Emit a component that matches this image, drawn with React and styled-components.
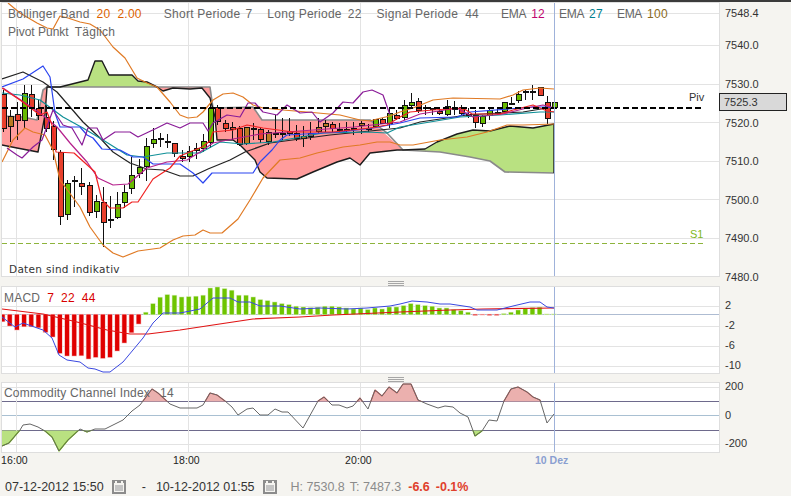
import React from 'react';
import styled, { createGlobalStyle } from 'styled-components';

const GlobalStyle = createGlobalStyle`
  html, body {
    margin: 0;
    background: #f5f4f0;
    font-family: "Liberation Sans", Arial, sans-serif;
  }
`;

const barX = (i) => 2.6 + i * 7.16;

// kind, high, body top, body bottom, low (screen pixels of the price pane)
const candles = [
  ['r', 90, 94, 128, 132], ['b', 110, 116, 126, 142], ['r', 102, 114, 120, 140], ['g', 85, 93, 120, 128],
  ['r', 85, 94, 108, 117], ['r', 100, 108, 115, 120], ['r', 105, 117, 128, 132], ['r', 121, 126, 149, 160],
  ['r', 150, 152, 216, 225], ['g', 180, 183, 214, 220], ['d', 176, 180, 181, 207], ['r', 168, 183, 186, 195],
  ['r', 182, 185, 212, 216], ['g', 195, 201, 211, 218], ['r', 187, 202, 222, 247], ['d', 196, 219, 220, 228],
  ['g', 192, 204, 217, 219], ['g', 185, 192, 202, 208], ['g', 157, 175, 188, 194], ['g', 159, 167, 173, 178],
  ['g', 138, 146, 166, 181], ['g', 128, 139, 143, 148], ['d', 133, 138, 139, 147], ['d', 134, 141, 142, 148],
  ['r', 143, 143, 153, 157], ['r', 150, 156, 158, 162], ['g', 146, 151, 156, 162], ['g', 143, 148, 150, 159],
  ['g', 134, 141, 148, 152], ['g', 100, 108, 142, 148], ['r', 105, 107, 121, 125], ['r', 120, 123, 128, 132],
  ['r', 122, 127, 129, 140], ['r', 126, 128, 144, 146], ['b', 127, 127, 143, 145], ['d', 123, 128, 129, 140],
  ['r', 127, 129, 139, 143], ['b', 130, 132, 141, 145], ['d', 115, 133, 134, 138], ['d', 118, 133, 134, 140],
  ['r', 118, 131, 133, 136], ['r', 125, 133, 138, 141], ['b', 126, 136, 138, 147], ['r', 122, 133, 136, 140],
  ['b', 118, 127, 131, 134], ['b', 120, 123, 126, 132], ['r', 122, 124, 128, 132], ['d', 123, 129, 130, 132],
  ['d', 122, 129, 130, 133], ['r', 122, 128, 129, 135], ['b', 121, 123, 125, 134], ['d', 124, 128, 129, 132],
  ['g', 119, 119, 126, 127], ['r', 118, 119, 123, 124], ['g', 108, 113, 123, 128], ['r', 110, 115, 118, 120],
  ['g', 100, 105, 117, 120], ['g', 93, 102, 105, 108], ['r', 98, 101, 110, 113], ['d', 105, 107, 108, 115],
  ['d', 108, 108, 109, 115], ['r', 107, 111, 113, 115], ['g', 100, 106, 114, 116], ['d', 101, 108, 109, 115],
  ['r', 105, 107, 113, 115], ['d', 108, 114, 115, 118], ['r', 110, 115, 122, 128], ['g', 115, 116, 123, 127],
  ['g', 108, 110, 115, 120], ['d', 108, 112, 113, 115], ['g', 102, 102, 111, 113], ['d', 97, 103, 104, 104],
  ['g', 91, 94, 100, 103], ['d', 90, 91, 92, 100], ['d', 85, 91, 92, 100], ['r', 87, 87, 95, 95],
  ['r', 96, 102, 118, 124], ['g', 102, 102, 107, 110],
];

const candleFill = { g: '#68bb00', r: '#e8402c', b: '#b87b22', d: '#111' };

const kumoFills = [
  ['#ff9c9c', '2,116 23,117 37,120 43,90 47,87 45,115 38,152 17,148 2,145'],
  ['#b9e181', '47,87 60,87 88,80 95,61 102,61 109,75 132,75 138,81 147,82 157,87'],
  ['#ff9c9c', '157,87 163,91 173,88 190,89 202,88 210,98 215,117 217,140 233,140 240,145 245,150 255,160 260,172 267,178 297,179 313,172 337,162 350,158 360,165 370,153 397,150 403,150 370,120 262,120 253,107 213,108 210,87'],
  ['#b9e181', '403,150 425,149 437,142 457,134 473,130 490,131 510,126 533,128 554,124 554,173 505,172 490,161 470,157 440,152'],
];

const spanB = '2,116 23,117 37,120 43,90 47,87 210,87 213,108 253,107 262,120 370,120 387,133 403,150 440,152 470,157 490,161 505,172 554,173';
const spanA = '2,145 17,148 38,152 45,115 47,87 60,87 88,80 95,61 102,61 109,75 132,75 138,81 147,82 157,87 163,91 173,88 190,89 202,88 210,98 215,117 217,140 233,140 240,145 245,150 255,160 260,172 267,178 297,179 313,172 337,162 350,158 360,165 370,153 397,150 403,150 425,149 437,142 457,134 473,130 490,131 510,126 533,128 554,124 554,173';

const priceLines = [
  ['#e07a24', '8,3 20,13 37,23 47,28 53,29 60,16 68,18 80,22 90,24 100,30 113,47 125,58 137,78 147,83 157,87 170,102 180,115 188,118 197,117 203,112 213,100 223,94 233,93 243,97 253,105 263,108 283,110 307,112 340,115 360,120 370,121 377,119 390,116 400,112 413,108 433,100 453,98 500,99 513,95 523,90 540,88 554,89'],
  ['#e07a24', '2,162 13,140 25,128 33,132 45,135 53,150 60,180 80,207 90,227 103,245 113,253 123,257 138,251 160,248 173,240 183,236 195,235 203,230 210,233 222,233 238,219 250,200 263,178 280,160 300,158 317,153 343,147 360,145 377,142 390,142 400,145 413,145 440,140 467,137 487,132 507,125 523,125 554,124'],
  ['#222', '2,79 23,72 43,82 57,92 70,107 83,122 100,138 113,152 130,163 147,169 163,170 180,176 193,176 208,169 230,160 245,152 270,143 330,135 400,128 420,122 467,115 500,113 523,112 547,108'],
  ['#109098', '2,93 20,95 40,100 63,117 83,128 103,140 127,155 143,157 167,153 200,153 220,142 243,144 273,142 323,133 367,132 387,133 400,127 460,117 500,115 540,112 555,112'],
  ['#2a44f0', '2,87 23,79 43,66 50,77 55,113 60,127 80,127 87,135 93,138 102,149 120,150 133,157 143,157 153,164 180,164 193,173 203,183 212,173 253,173 260,162 272,150 280,140 287,135 340,132 373,128 400,123 420,118 457,117 470,112 533,107 547,107 555,108'],
  ['#8a1c98', '7,148 17,155 22,158 33,147 42,140 53,110 63,125 72,128 82,145 88,128 97,128 103,140 115,132 130,132 138,137 157,128 167,123 180,128 190,123 203,123 208,131 213,123 227,115 240,117 248,103 255,103 263,112 277,115 287,105 300,113 312,112 320,122 333,113 343,102 353,103 363,92 372,90 383,95 390,115'],
  ['#b5208c', '3,88 40,113 57,127 70,143 87,162 98,178 113,185 128,184 147,168 167,162 187,160 200,152 213,143 233,139 260,134 300,131 354,127 400,122 420,114 457,108 473,117 503,114 527,108 543,105 555,108'],
  ['#f02222', '2,88 20,100 40,115 47,112 52,125 56,152 74,153 95,172 102,200 110,208 123,208 132,202 138,202 153,179 170,168 180,156 202,147 210,141 213,132 233,130 247,125 263,128 293,132 333,132 370,128 387,125 400,117 410,112 433,110 463,108 472,114 500,114 513,110 533,105 547,111 555,112'],
];

const priceTicks = [
  ['7548.4', 16], ['7540.0', 48], ['7530.0', 87], ['7520.0', 126],
  ['7510.0', 164], ['7500.0', 203], ['7490.0', 241], ['7480.0', 280],
];

// distance of each histogram bar from the zero line, positive is below it
const macdBars = [
  7, 11.3, 15.3, 12, 12, 13, 17.7, 22.3, 38.7, 41.3, 41.3, 41, 44.3, 42.7, 43.7, 42.7, 36.3, 28.3, 18, 9.3,
  -2, -10.7, -17, -19.7, -19, -17.3, -17.7, -18, -19, -26.3, -27.3, -25.7, -24, -19, -19, -17.3, -14.7, -13.7,
  -12.3, -10.7, -9.7, -8, -7.3, -6.7, -7, -8, -8, -7.3, -6.3, -5.3, -6.3, -4.7, -6.3, -5.3, -7.3, -7.3,
  -8.7, -10.7, -9.7, -8.7, -8, -6.3, -6.3, -4.7, -3.7, -2, 0.7, 0.3, 0.7, 0.7, -0.7, -2, -4.3, -5.7, -6.7, -7, -0.3, -0.3,
];

const macdSignal = '2,309 43,314 77,322 107,330 130,334 148,334 180,330 213,325 253,319 300,317 333,315 400,312 450,310 483,309 554,308';
const macdLine = '2,317 15,327 23,323 43,330 52,338 59,355 67,360 80,362 88,368 95,369 103,372 110,372 123,362 143,338 153,323 163,313 180,313 200,309 213,298 230,298 238,302 250,302 260,306 280,306 300,309 320,308 347,309 367,308 390,306 400,304 412,301 427,302 440,304 450,304 470,307 477,310 497,310 513,306 530,302 540,302 547,307 554,308';

const cciLine = '2,446 9,443 20,430 23,425 30,424 38,427 45,431 52,437 59,451 68,440 80,429 87,432 95,429 105,429 123,420 132,411 140,405 152,389 158,393 170,404 180,408 197,408 203,405 210,393 217,395 225,401 232,407 238,415 247,409 253,408 260,415 268,415 275,409 282,412 288,412 303,428 318,401 324,397 332,405 339,405 347,408 353,406 360,398 368,409 375,390 382,396 389,387 397,393 403,384 411,384 418,400 427,404 438,408 445,406 453,407 460,413 468,417 475,436 482,431 489,420 497,421 504,401 511,389 518,387 527,392 533,397 540,400 547,423 554,414';

const VERTICALS = [16, 188, 360];

const Window = styled.div`
  width: 791px;
  height: 496px;
  box-sizing: border-box;
  border-top: 2px solid #3b3b3b;
  padding-left: 1px;
  overflow: hidden;
  color: #333;
`;

const PaneRow = styled.div`
  position: relative;
  display: flex;
  height: ${(p) => p.$height}px;
`;

const Plot = styled.div`
  position: relative;
  box-sizing: border-box;
  width: 719px;
  height: 100%;
  background: #fff;
  border: 1px solid #dedede;
`;

const ChartSvg = styled.svg`
  display: block;
`;

const Axis = styled.svg`
  display: block;
  flex: none;
  overflow: visible;
`;

const Tick = styled.text`
  font-family: "Liberation Sans", Arial, sans-serif;
  font-size: 11px;
  fill: #333;
`;

const PriceTag = styled.div`
  position: absolute;
  left: 718px;
  top: 91px;
  box-sizing: border-box;
  width: 68px;
  height: 18px;
  padding-left: 4px;
  background: #d9d9d9;
  border: 1px solid #222;
  font-size: 11px;
  line-height: 17px;
  color: #333;
`;

const Splitter = styled.div`
  display: flex;
  align-items: flex-end;
  justify-content: center;
  box-sizing: border-box;
  width: 719px;
  height: ${(p) => p.$height}px;
  padding-left: 70px;
`;

const Grip = styled.div`
  width: 16px;
  height: 5px;
  background: repeating-linear-gradient(to bottom, #a6a6a6 0 1px, transparent 1px 2px);
`;

const Legend = styled.div`
  position: absolute;
  left: 6px;
  top: 3px;
  display: flex;
  flex-direction: column;
  font-size: 12px;
  line-height: 17.5px;
  letter-spacing: 0.25px;
  color: #666;
  white-space: nowrap;
`;

const LegendRow = styled.div`
  display: flex;
`;

const LegendItem = styled.span`
  margin-left: ${(p) => p.$gap || 0}px;
  letter-spacing: ${(p) => p.$spacing ?? 0.25}px;
`;

const LegendValue = styled.span`
  margin-left: ${(p) => p.$gap || 7}px;
  color: ${(p) => p.$color};
`;

const PaneTitle = styled.div`
  position: absolute;
  left: 2px;
  top: ${(p) => p.$top}px;
  font-size: 12px;
  letter-spacing: 0.2px;
  color: #666;
  white-space: nowrap;
`;

const Notice = styled.div`
  position: absolute;
  left: 7px;
  top: 260px;
  font-family: "DejaVu Sans", Verdana, sans-serif;
  font-size: 10.5px;
  letter-spacing: 0.3px;
  color: #333;
`;

const PivotLabel = styled.div`
  position: absolute;
  left: ${(p) => p.$left}px;
  top: ${(p) => p.$top}px;
  font-size: 11px;
  color: ${(p) => p.$color};
`;

const TimeAxis = styled.div`
  display: flex;
  height: 13px;
  align-items: center;
`;

const TimeLabel = styled.span`
  width: ${(p) => p.$width}px;
  flex: none;
  font-size: 10.5px;
  letter-spacing: 0.1px;
  color: #222;
`;

const DayLabel = styled.span`
  margin-left: 18px;
  font-size: 10.5px;
  font-weight: bold;
  color: #8a9fd0;
`;

const Footer = styled.div`
  display: flex;
  align-items: center;
  height: 18px;
  margin-top: 12px;
  padding-left: 4px;
  font-size: 12.5px;
  color: #333;
  white-space: nowrap;
`;

const CalendarButton = styled.svg`
  flex: none;
  margin: 0 16px 0 8px;
`;

const Separator = styled.span`
  margin-right: 10px;
`;

const Stat = styled.span`
  margin-left: ${(p) => p.$gap}px;
  color: ${(p) => p.$color || '#8b8b8b'};
  font-weight: ${(p) => (p.$strong ? 'bold' : 'normal')};
`;

const Curve = styled.polyline`
  fill: none;
  stroke: ${(p) => p.$color};
  stroke-width: ${(p) => p.$width || 1.2};
  stroke-linejoin: round;
`;

const GridLine = styled.line`
  stroke: ${(p) => p.$color || '#e3e3e3'};
  stroke-width: 1;
  shape-rendering: crispEdges;
`;

const DashLine = styled.line`
  stroke: ${(p) => p.$color};
  stroke-width: ${(p) => p.$width};
  stroke-dasharray: ${(p) => p.$dash};
`;

const Area = styled.polygon`
  fill: ${(p) => p.$color};
`;

const Wick = styled.line`
  stroke: #111;
  stroke-width: 1;
  shape-rendering: crispEdges;
`;

const Body = styled.rect`
  fill: ${(p) => p.$color};
  stroke: #111;
  stroke-width: 1;
  shape-rendering: crispEdges;
`;

const HistBar = styled.rect`
  fill: ${(p) => p.$color};
  stroke: ${(p) => p.$halo};
  stroke-width: 1.2;
  paint-order: stroke;
`;

function Grid({ rows, top, bottom }) {
  return (
    <>
      {rows.map(([y, color]) => (
        <GridLine key={y} x1={0} x2={720} y1={y} y2={y} $color={color} />
      ))}
      {VERTICALS.map((x) => (
        <GridLine key={x} x1={x} x2={x} y1={top} y2={bottom} />
      ))}
    </>
  );
}

function CrossHair({ top, bottom }) {
  return <GridLine x1={554.5} x2={554.5} y1={top} y2={bottom} $color="#9fb2da" />;
}

function Candle({ index, kind, high, open, close, low }) {
  const x = Math.round(barX(index)) + 0.5;
  return (
    <g>
      <Wick x1={x} x2={x} y1={high} y2={low} />
      {kind === 'd' ? (
        <Body x={x - 2.5} y={open} width={5} height={1} $color={candleFill.d} />
      ) : (
        <Body x={x - 2.5} y={open + 0.5} width={5} height={close - open} $color={candleFill[kind]} />
      )}
    </g>
  );
}

function PricePane() {
  return (
    <PaneRow $height={275}>
      <Plot>
        <ChartSvg width={717} height={273} viewBox="2 3 717 273">
          <Grid rows={[[13.5], [45.5], [84.5], [122.5], [161.5], [199.5], [238.5]]} top={3} bottom={276} />
          {kumoFills.map(([color, points]) => (
            <Area key={points} points={points} $color={color} />
          ))}
          <Curve points={spanB} $color="#8a8a8a" $width={1.6} />
          <Curve points={spanA} $color="#1c1c1c" $width={1.4} />
          {candles.map(([kind, high, open, close, low], i) => (
            <Candle key={i} index={i} kind={kind} high={high} open={open} close={close} low={low} />
          ))}
          {priceLines.map(([color, points]) => (
            <Curve key={points} points={points} $color={color} />
          ))}
          <DashLine x1={2} x2={703} y1={108} y2={108} $color="#000" $width={2} $dash="6 3" />
          <DashLine x1={2} x2={703} y1={243.5} y2={243.5} $color="#8db43c" $width={1} $dash="5 3" />
          <CrossHair top={3} bottom={276} />
        </ChartSvg>
        <Legend>
          <LegendRow>
            <LegendItem>Bollinger Band</LegendItem>
            <LegendValue $color="#dd6200">20</LegendValue>
            <LegendValue $color="#dd6200">2.00</LegendValue>
            <LegendItem $gap={22}>Short Periode</LegendItem>
            <LegendValue $color="#666" $gap={5}>7</LegendValue>
            <LegendItem $gap={15}>Long Periode</LegendItem>
            <LegendValue $color="#666" $gap={6}>22</LegendValue>
            <LegendItem $gap={15}>Signal Periode</LegendItem>
            <LegendValue $color="#666">44</LegendValue>
            <LegendItem $gap={22} $spacing={-0.3}>EMA</LegendItem>
            <LegendValue $color="#c0056f" $gap={5}>12</LegendValue>
            <LegendItem $gap={14} $spacing={-0.3}>EMA</LegendItem>
            <LegendValue $color="#00808f" $gap={5}>27</LegendValue>
            <LegendItem $gap={14} $spacing={-0.3}>EMA</LegendItem>
            <LegendValue $color="#8a6a20" $gap={5}>100</LegendValue>
          </LegendRow>
          <LegendRow>
            <LegendItem $spacing={0}>Pivot Punkt</LegendItem>
            <LegendValue $color="#666" $gap={6}>Täglich</LegendValue>
          </LegendRow>
        </Legend>
        <Notice>Daten sind indikativ</Notice>
        <PivotLabel $left={687} $top={88} $color="#333">Piv</PivotLabel>
        <PivotLabel $left={688} $top={225} $color="#7fb81e">S1</PivotLabel>
      </Plot>
      <Axis width={68} height={275} viewBox="720 2 68 275">
        {priceTicks.map(([label, y]) => (
          <Tick key={label} x={725} y={y + 1}>{label}</Tick>
        ))}
      </Axis>
      <PriceTag>7525.3</PriceTag>
    </PaneRow>
  );
}

function MacdPane() {
  return (
    <PaneRow $height={88}>
      <Plot>
        <ChartSvg width={717} height={86} viewBox="2 287 717 86">
          <Grid rows={[[306.5], [326.5], [346.5], [366.5], [314.5, '#aebcd2']]} top={287} bottom={373} />
          {macdBars.map((offset, i) => (
            <HistBar
              key={i}
              x={barX(i) - 2.1}
              y={offset > 0 ? 314.5 : 314.5 + offset}
              width={4.2}
              height={Math.abs(offset)}
              $color={offset > 0 ? '#e00000' : '#6ec400'}
              $halo={offset > 0 ? '#f7c6c6' : '#dff1c6'}
            />
          ))}
          <Curve points={macdSignal} $color="#e01414" />
          <Curve points={macdLine} $color="#3a48e0" $width={1} />
          <CrossHair top={287} bottom={373} />
        </ChartSvg>
        <PaneTitle $top={4}>
          MACD
          <LegendValue $color="#d80000">7</LegendValue>
          <LegendValue $color="#d80000">22</LegendValue>
          <LegendValue $color="#d80000">44</LegendValue>
        </PaneTitle>
      </Plot>
      <Axis width={68} height={88} viewBox="720 286 68 88">
        <Tick x={725} y={309}>2</Tick>
        <Tick x={725} y={329}>-2</Tick>
        <Tick x={725} y={349}>-6</Tick>
        <Tick x={725} y={369}>-10</Tick>
      </Axis>
    </PaneRow>
  );
}

function CciPane() {
  const closed = `${cciLine} 554,415 2,415`;
  return (
    <PaneRow $height={71}>
      <Plot>
        <ChartSvg width={717} height={69} viewBox="2 383 717 69">
          <defs>
            <clipPath id="cci-high"><rect x={0} y={380} width={720} height={21.5} /></clipPath>
            <clipPath id="cci-low"><rect x={0} y={430.5} width={720} height={24} /></clipPath>
          </defs>
          <Grid rows={[[387.5], [444.5], [415.5, '#a9c0d2'], [401.5, '#6e6a8c'], [430.5, '#6e6a8c']]} top={383} bottom={452} />
          <g clipPath="url(#cci-high)">
            <Area points={closed} $color="#ebb0ae" />
            <Curve points={cciLine} $color="#d8605c" />
          </g>
          <g clipPath="url(#cci-low)">
            <Area points={closed} $color="#b9e181" />
            <Curve points={cciLine} $color="#78c800" />
          </g>
          <Curve points={cciLine} $color="#666" $width={1} />
          <CrossHair top={383} bottom={452} />
        </ChartSvg>
        <PaneTitle $top={3}>
          Commodity Channel Index
          <LegendValue $color="#666" $gap={10}>14</LegendValue>
        </PaneTitle>
      </Plot>
      <Axis width={68} height={71} viewBox="720 382 68 71">
        <Tick x={725} y={390}>200</Tick>
        <Tick x={725} y={419}>0</Tick>
        <Tick x={725} y={447}>-200</Tick>
      </Axis>
    </PaneRow>
  );
}

function CalendarIcon() {
  return (
    <CalendarButton width={14} height={14} viewBox="0 0 14 14">
      <rect width={14} height={14} fill="#8c8c8c" />
      <rect x={2} y={3} width={10} height={9} fill="#f5f4f0" />
      <rect x={3} y={5} width={8} height={6} fill="#c4c4c4" />
      <rect x={3} y={1} width={2} height={3} fill="#f5f4f0" />
      <rect x={9} y={1} width={2} height={3} fill="#f5f4f0" />
    </CalendarButton>
  );
}

export default function App() {
  return (
    <Window>
      <GlobalStyle />
      <PricePane />
      <Splitter $height={9}><Grip /></Splitter>
      <MacdPane />
      <Splitter $height={8}><Grip /></Splitter>
      <CciPane />
      <TimeAxis>
        <TimeLabel $width={172}>16:00</TimeLabel>
        <TimeLabel $width={172}>18:00</TimeLabel>
        <TimeLabel $width={172}>20:00</TimeLabel>
        <DayLabel>10 Dez</DayLabel>
      </TimeAxis>
      <Footer>
        <span>07-12-2012 15:50</span>
        <CalendarIcon />
        <Separator>-</Separator>
        <span>10-12-2012 01:55</span>
        <CalendarIcon />
        <Stat $gap={-2}>H: 7530.8</Stat>
        <Stat $gap={5}>T: 7487.3</Stat>
        <Stat $gap={7} $color="#e0402c" $strong>-6.6</Stat>
        <Stat $gap={6} $color="#e0402c" $strong>-0.1%</Stat>
      </Footer>
    </Window>
  );
}
